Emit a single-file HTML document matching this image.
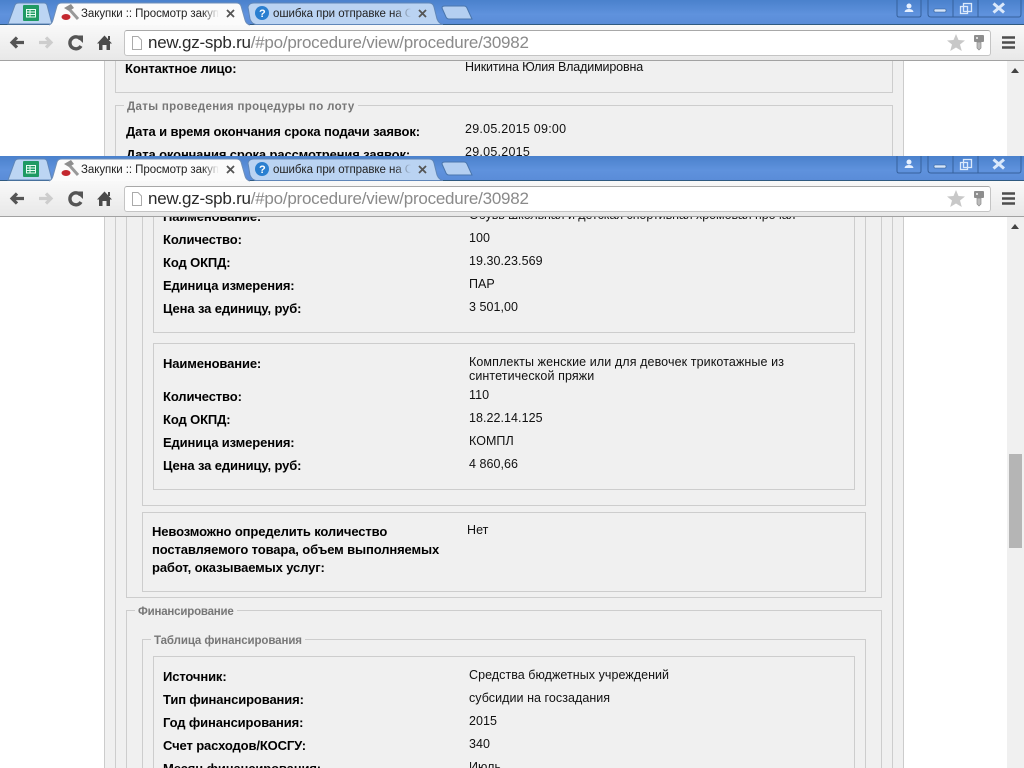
<!DOCTYPE html>
<html><head><meta charset="utf-8"><style>
html,body{margin:0;padding:0;background:#fff;width:1024px;height:768px;overflow:hidden}
*{box-sizing:border-box}
.a{position:absolute}
.win{position:absolute;left:0;width:1024px;overflow:hidden;background:#fff}
.bar{position:absolute;left:0;top:0;width:1024px;height:25px;background:linear-gradient(#4a81cc,#5f92dd 60%,#5a8cd8);border-bottom:1px solid #35608f}
.tb{position:absolute;left:0;top:24px;width:1024px;height:37px;background:linear-gradient(#f9f9f9,#e8e8e8);border-top:1px solid #2f5a80;border-bottom:1px solid #a2a2a2}
.omni{position:absolute;left:124px;top:30px;width:867px;height:26px;background:#fff;border:1px solid #c4c4c4;border-top-color:#a8a8a8;border-radius:3px}
.url{position:absolute;left:148px;top:31px;font:17px/24px "Liberation Sans",sans-serif;color:#8a8a8a;white-space:nowrap;letter-spacing:-.24px}
.url b{font-weight:normal;color:#2a2a2a}
.tt{position:absolute;top:7px;font:11.5px/14px "Liberation Sans",sans-serif;color:#222;white-space:nowrap;overflow:hidden;letter-spacing:-.05px;-webkit-mask-image:linear-gradient(90deg,#000 88%,transparent)}
.c{position:absolute;left:0;top:61px;width:1024px;overflow:hidden;background:#fff}
.sb{position:absolute;left:1007px;top:0;width:17px;bottom:0;background:#f0f0f0}
.p{position:absolute;left:104px;top:0;width:800px;bottom:0;background:#f0f0f0;border-left:1px solid #ccc;border-right:1px solid #ccc}
.bx{position:absolute;border:1px solid #cdcdcd}
.o{border-bottom:0}
.k{position:absolute;font:bold 13px/16px "Liberation Sans",sans-serif;color:#000;white-space:nowrap;letter-spacing:-.12px}
.v{position:absolute;font:12.5px/14px "Liberation Sans",sans-serif;color:#111;white-space:nowrap;letter-spacing:.05px}
.g{position:absolute;font:bold 11.5px/14px "Liberation Sans",sans-serif;color:#777;background:#f0f0f0;padding:0 3px;white-space:nowrap}
</style></head><body>
<svg width="0" height="0" style="position:absolute"><defs>
<symbol id="chrome" viewBox="0 0 1024 61">
<path d="M8 24 L15 5 Q16 3 19 3 H44 Q46 3 47 5 L52 24Z" fill="#bcd5f3" stroke="#5f86b8"/>
<path d="M443 24.500 Q439 24 437 19 L434 7 Q433 3 429 3 H254 Q249 3 248 7 L250 19 Q252 24 256 24.500Z" fill="#bad3f2" stroke="#5f86b8"/>
<path d="M250 25 Q246 24 245 20 L241 6 Q240 3 236 3 H62 Q58 3 57 6 L53 20 Q52 24 49 25" fill="#fbfbfb" stroke="#6f8fb8"/>
<path d="M445 6 H464 Q466 6 467 8 L472 19 H449 Q447 19 446 17 L442 8 Q442 6 445 6Z" fill="#b4cff1" stroke="#4a76ad"/>
<rect x="23" y="5" width="16" height="16" rx="1" fill="#1f9a63"/>
<path d="M26.500 9.500h9v7.500h-9zM26.500 12h9M26.500 14.500h9M30 9.500v7.500" fill="none" stroke="#e8fff2"/>
<path d="M64 8 L71 4 L74 8 L69 11Z" fill="#8d8d8d"/><path d="M70 10 L78 19" stroke="#999" stroke-width="3"/><ellipse cx="66" cy="17" rx="4.500" ry="3" fill="#c3272e"/>
<circle cx="262" cy="13" r="7" fill="#2a7fd0"/><text x="259" y="17" font-family="Liberation Sans" font-weight="bold" font-size="11" fill="#fff">?</text>
<path d="M227 10 L234 17 M234 10 L227 17M419 10 L426 17 M426 10 L419 17" stroke="#555" stroke-width="1.800"/>
<path d="M24 42.500 H12 M17 37.500 L12 42.500 L17 47.500" fill="none" stroke="#555" stroke-width="3.200"/>
<path d="M39 42.500 H51 M46 37.500 L51 42.500 L46 47.500" fill="none" stroke="#cdcdcd" stroke-width="3.200"/>
<path d="M80.500 39 A6 6 0 1 0 81 46" fill="none" stroke="#555" stroke-width="3.400"/><path d="M75 35.500 L83 35.500 L83 43Z" fill="#555"/>
<path d="M97 43.500 L104.500 35.500 L112 43.500 H110 V50 H106.500 V45 H102.500 V50 H99 V43.500Z" fill="#4a4a4a"/><rect x="108" y="36" width="2" height="4" fill="#4a4a4a"/>
<path d="M132.500 36.500 H138 L141.500 40 V49.500 H132.500Z" fill="#fff" stroke="#aaa"/>
<path d="M956 34 L958.500 40 L965 40.500 L960 44.500 L961.800 51 L956 47.500 L950.200 51 L952 44.500 L947 40.500 L953.500 40Z" fill="#c8c8c8"/>
<rect x="974" y="35" width="10" height="7" rx="1" fill="#8e8e8e"/><rect x="976" y="37" width="2" height="2" fill="#ddd"/><path d="M977 42 h4 v6 l-2 2 l-2 -2z" fill="#bbb" stroke="#8a8a8a" stroke-width=".7"/>
<path d="M1002 37.500h13M1002 42.500h13M1002 47.500h13" stroke="#4d4d4d" stroke-width="2.500"/>
<path d="M897 0 V15 Q897 17 899 17 H919 Q921 17 921 15 V0 M928 0 V14 Q928 17 931 17 H1019 Q1021 17 1021 14 V0 M953 0 V17 M978 0 V17" fill="none" stroke="#36619c"/>
<circle cx="909" cy="6" r="2.500" fill="#e6f0ff"/><path d="M904.500 12 Q905 9 909 9 Q913 9 913.500 12Z" fill="#e6f0ff"/>
<rect x="934" y="9" width="12" height="3" rx="1" fill="#d5e5fa" stroke="#2f5a90" stroke-width=".6"/>
<path d="M963.500 3.500h8v8h-8zM960.500 6.500h7v7h-7z" fill="#5f92dd" stroke="#dbe9fb" stroke-width="1.300"/>
<path d="M993.500 3.500 L1004 12.500 M1004 3.500 L993.500 12.500" stroke="#dbe9fb" stroke-width="3"/>
</symbol></defs></svg>

<div class="win" style="top:0;height:156px">
<div class="bar"></div><div class="tb"></div><div class="omni"></div>
<svg class="a" style="left:0;top:0;z-index:3" width="1024" height="61"><use href="#chrome"/></svg>
<div class="url" style="z-index:4"><b>new.gz-spb.ru</b>/#po/procedure/view/procedure/30982</div>
<div class="tt" style="left:81px;width:138px;z-index:4">Закупки :: Просмотр закупки</div>
<div class="tt" style="left:273px;width:138px;z-index:4">ошибка при отправке на ООС</div>
<div class="c" style="height:95px">
<div class="sb"></div>
<div class="a" style="left:1011px;top:7px;border:4px solid transparent;border-bottom:5px solid #444;border-top:0"></div>
<div class="p"></div>
<div class="bx" style="left:115px;top:-20px;width:778px;height:52px"></div>
<div class="bx o" style="left:115px;top:44px;width:778px;height:51px"></div>
<div class="g" style="left:124px;top:39px;letter-spacing:.33px">Даты проведения процедуры по лоту</div>
<div class="k" style="left:125px;top:0">Контактное лицо:</div>
<div class="v" style="left:465px;top:-1px;letter-spacing:-.15px">Никитина Юлия Владимировна</div>
<div class="k" style="left:126px;top:63px">Дата и время окончания срока подачи заявок:</div>
<div class="v" style="left:465px;top:61px;letter-spacing:.25px">29.05.2015 09:00</div>
<div class="k" style="left:126px;top:86px;height:9px;overflow:hidden">Дата окончания срока рассмотрения заявок:</div>
<div class="v" style="left:465px;top:84px;height:11px;overflow:hidden;letter-spacing:.25px">29.05.2015</div>
</div>
</div>

<div class="win" style="top:156px;height:612px">
<div class="bar"></div><div class="tb"></div><div class="omni"></div>
<svg class="a" style="left:0;top:0;z-index:3" width="1024" height="61"><use href="#chrome"/></svg>
<div class="url" style="z-index:4"><b>new.gz-spb.ru</b>/#po/procedure/view/procedure/30982</div>
<div class="tt" style="left:81px;width:138px;z-index:4">Закупки :: Просмотр закупки</div>
<div class="tt" style="left:273px;width:138px;z-index:4">ошибка при отправке на ООС</div>
<div class="c" style="height:551px">
<div class="sb"></div>
<div class="a" style="left:1011px;top:7px;border:4px solid transparent;border-bottom:5px solid #444;border-top:0"></div>
<div class="a" style="left:1009px;top:237px;width:13px;height:94px;background:#b5b5b5"></div>
<div class="p"></div>
<div class="bx o" style="left:115px;top:-60px;width:778px;height:611px"></div>
<div class="bx" style="left:126px;top:-60px;width:756px;height:441px"></div>
<div class="bx" style="left:142px;top:-60px;width:724px;height:349px"></div>
<div class="bx" style="left:153px;top:-60px;width:702px;height:176px"></div>
<div class="bx" style="left:153px;top:126px;width:702px;height:147px"></div>
<div class="bx" style="left:142px;top:295px;width:724px;height:80px"></div>
<div class="bx o" style="left:126px;top:393px;width:756px;height:158px"></div>
<div class="bx o" style="left:142px;top:422px;width:724px;height:129px"></div>
<div class="bx o" style="left:153px;top:439px;width:702px;height:112px"></div>
<div class="g" style="left:135px;top:388px;letter-spacing:-.2px">Финансирование</div>
<div class="g" style="left:151px;top:417px;letter-spacing:-.1px">Таблица финансирования</div>

<div class="k" style="left:163px;top:-8px">Наименование:</div>
<div class="v" style="left:469px;top:-9px;letter-spacing:-.05px">Обувь школьная и детская спортивная хромовая прочая</div>
<div class="k" style="left:163px;top:15px">Количество:</div><div class="v" style="left:469px;top:14px">100</div>
<div class="k" style="left:163px;top:38px">Код ОКПД:</div><div class="v" style="left:469px;top:37px">19.30.23.569</div>
<div class="k" style="left:163px;top:61px">Единица измерения:</div><div class="v" style="left:469px;top:60px">ПАР</div>
<div class="k" style="left:163px;top:84px">Цена за единицу, руб:</div><div class="v" style="left:469px;top:83px">3 501,00</div>

<div class="k" style="left:163px;top:139px">Наименование:</div>
<div class="v" style="left:469px;top:138px;letter-spacing:.1px">Комплекты женские или для девочек трикотажные из<br>синтетической пряжи</div>
<div class="k" style="left:163px;top:172px">Количество:</div><div class="v" style="left:469px;top:171px">110</div>
<div class="k" style="left:163px;top:195px">Код ОКПД:</div><div class="v" style="left:469px;top:194px">18.22.14.125</div>
<div class="k" style="left:163px;top:218px">Единица измерения:</div><div class="v" style="left:469px;top:217px">КОМПЛ</div>
<div class="k" style="left:163px;top:241px">Цена за единицу, руб:</div><div class="v" style="left:469px;top:240px">4 860,66</div>

<div class="k" style="left:152px;top:306px;line-height:18px">Невозможно определить количество<br>поставляемого товара, объем выполняемых<br>работ, оказываемых услуг:</div>
<div class="v" style="left:467px;top:306px">Нет</div>

<div class="k" style="left:163px;top:452px">Источник:</div><div class="v" style="left:469px;top:451px">Средства бюджетных учреждений</div>
<div class="k" style="left:163px;top:475px">Тип финансирования:</div><div class="v" style="left:469px;top:474px">субсидии на госзадания</div>
<div class="k" style="left:163px;top:498px">Год финансирования:</div><div class="v" style="left:469px;top:497px">2015</div>
<div class="k" style="left:163px;top:521px">Счет расходов/КОСГУ:</div><div class="v" style="left:469px;top:520px">340</div>
<div class="k" style="left:163px;top:544px;height:7px;overflow:hidden">Месяц финансирования:</div><div class="v" style="left:469px;top:543px;height:8px;overflow:hidden">Июль</div>
</div>
</div>
</body></html>
